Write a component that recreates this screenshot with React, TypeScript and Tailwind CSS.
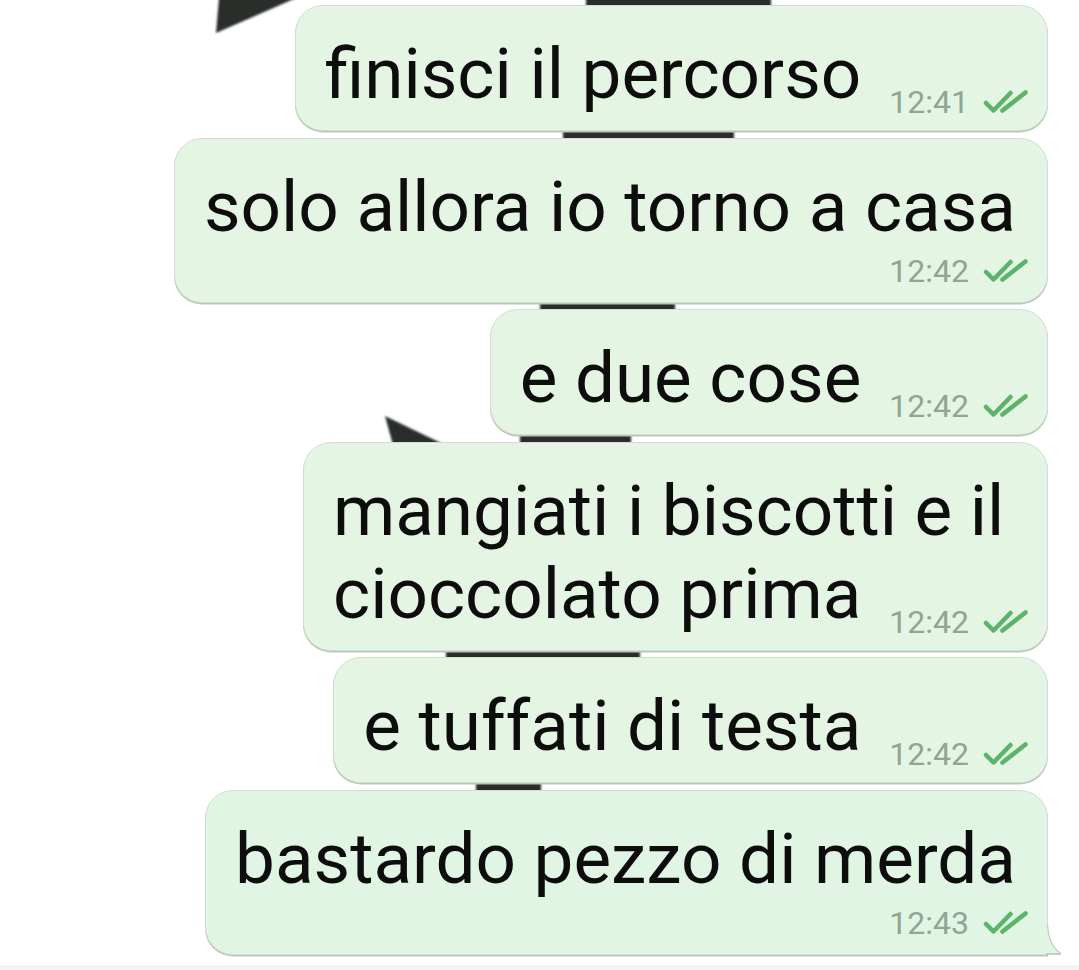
import type { ReactNode } from 'react'

interface Message {
  lines: string[]
  time: string
  below?: boolean
  tail?: boolean
}

const messages: Message[] = [
  { lines: ['finisci il percorso'], time: '12:41' },
  { lines: ['solo allora io torno a casa'], time: '12:42', below: true },
  { lines: ['e due cose'], time: '12:42' },
  { lines: ['mangiati i biscotti e il', 'cioccolato prima'], time: '12:42' },
  { lines: ['e tuffati di testa'], time: '12:42' },
  { lines: ['bastardo pezzo di merda'], time: '12:43', below: true, tail: true },
]

function DoubleCheck() {
  return (
    <svg width="46" height="24" viewBox="0 0 46 24" fill="none" className="shrink-0">
      <path d="M3 13 L10.5 20.5 L27.5 3" stroke="#5cb36a" strokeWidth="4.5" strokeLinecap="round" strokeLinejoin="round" />
      <path d="M19.5 20.5 L42.5 2.5" stroke="#5cb36a" strokeWidth="4.5" strokeLinecap="round" strokeLinejoin="round" />
    </svg>
  )
}

function Meta({ time }: { time: string }) {
  return (
    <div className="flex shrink-0 items-center gap-[14px] pl-[28px]">
      <span className="text-[32px] leading-8 text-[#8fa595]">{time}</span>
      <DoubleCheck />
    </div>
  )
}

function Tail() {
  // little sent-message tail on the last bubble, continues the right border
  return (
    <svg width="17" height="31" viewBox="0 0 17 31" className="absolute -right-[16px] -bottom-[1px]">
      <path d="M0 0 L1.5 0 Q2.5 22 15 29.5 L0 29.5 Z" fill="#e1f5e4" />
      <path d="M1.5 0 Q2.5 22 15 29.5" fill="none" stroke="#c3cdc3" strokeWidth="1.2" />
      <path d="M0 30 L15 30" stroke="#b8c2b8" strokeWidth="1.6" />
    </svg>
  )
}

function Bubble({ msg }: { msg: Message }) {
  const { lines, time, below, tail } = msg
  const head = lines.slice(0, -1)
  const last = lines[lines.length - 1]

  let body: ReactNode
  if (below) {
    body = (
      <>
        <p className="pr-[13px]">{last}</p>
        <div className="mt-[7px] flex justify-end">
          <Meta time={time} />
        </div>
      </>
    )
  } else {
    body = (
      <>
        {head.map((l) => (
          <p key={l}>{l}</p>
        ))}
        <div className="flex items-end">
          <p>{last}</p>
          <div className="-mb-[3px]">
            <Meta time={time} />
          </div>
        </div>
      </>
    )
  }

  return (
    <div
      className={`relative flex flex-col border border-[#d3ddd3] pt-[26px] pr-[18px] pb-[15px] pl-[29px] text-[71px] leading-[83px] text-[#0d0d0d] shadow-[0_1.5px_0_#bcc5bc] ${
        tail ? 'rounded-[28px] rounded-br-none bg-[#e1f5e4]' : 'rounded-[28px] bg-[#e4f6e3]'
      }`}
    >
      {body}
      {tail && <Tail />}
    </div>
  )
}

function Wallpaper() {
  // dark doodles of the chat wallpaper peeking between bubbles
  return (
    <svg className="absolute inset-0" width="1079" height="970" viewBox="0 0 1079 970">
      <defs>
        <filter id="soft">
          <feGaussianBlur stdDeviation="1" />
        </filter>
      </defs>
      <g fill="#2b2d2a" filter="url(#soft)">
        <polygon points="219,-2 296,-2 216,33" />
        <rect x="586" y="-10" width="185" height="25" rx="4" />
        <rect x="563" y="120" width="171" height="30" rx="4" />
        <rect x="540" y="292" width="135" height="30" rx="4" />
        <rect x="520" y="425" width="111" height="30" rx="4" />
        <polygon points="385,416 445,445 393,445" />
        <rect x="446" y="640" width="194" height="30" rx="4" />
        <rect x="476" y="770" width="65" height="30" rx="4" />
      </g>
    </svg>
  )
}

export default function App() {
  return (
    <div className="relative flex h-[970px] w-[1079px] flex-col overflow-hidden bg-white font-['Roboto',sans-serif]">
      <Wallpaper />
      <div className="relative flex flex-col items-end gap-[6.5px] pt-[5px] pr-[31px]">
        {messages.map((m, i) => (
          <Bubble key={i} msg={m} />
        ))}
      </div>
      <div className="flex-1" />
      <div className="relative h-[5px] bg-[#f3f3f3]" />
    </div>
  )
}
